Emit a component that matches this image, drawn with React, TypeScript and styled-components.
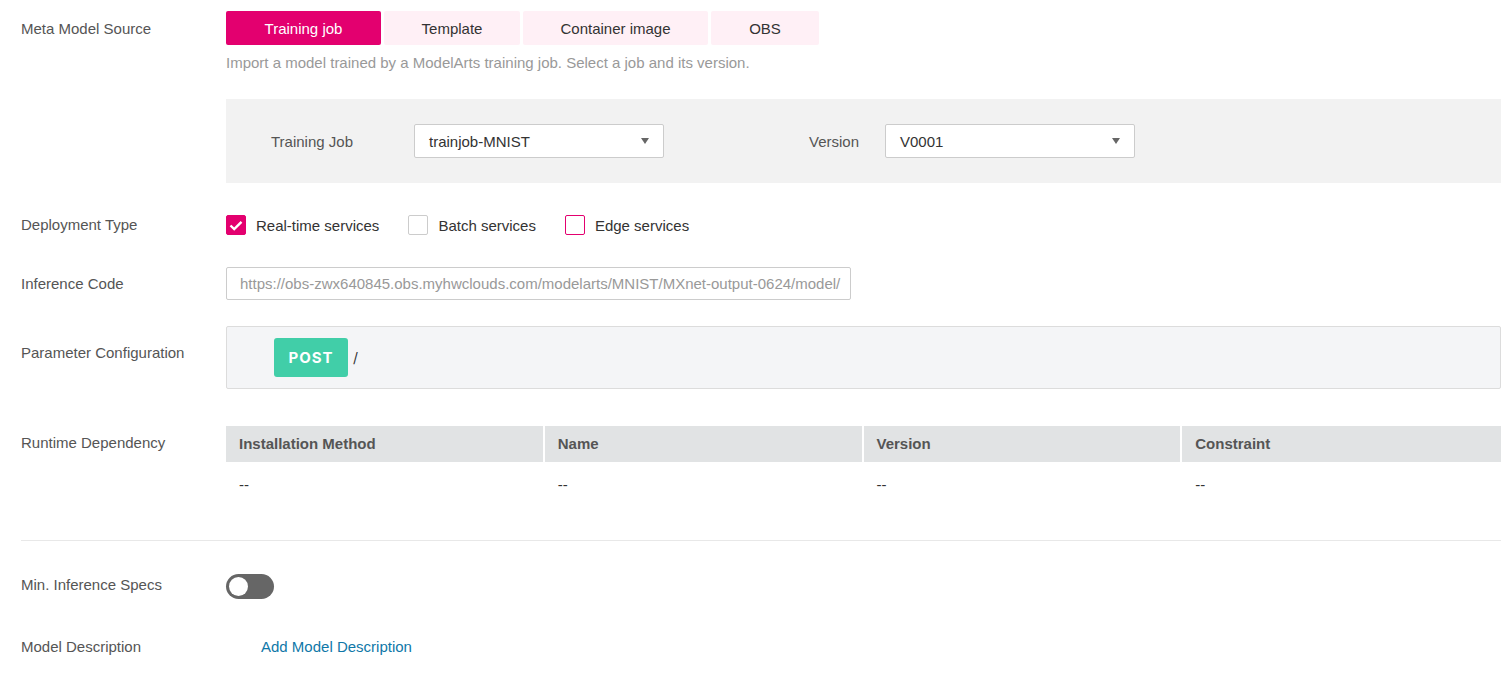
import styled, { createGlobalStyle } from 'styled-components';

const Global = createGlobalStyle`
    html, body {
        margin: 0;
        padding: 0;
        background: #fff;
    }
    body {
        font-family: "Liberation Sans", Arial, sans-serif;
        font-size: 15px;
        color: #333;
    }
`;

const Page = styled.div`
    width: 1511px;
    box-sizing: border-box;
    padding: 11px 10px 0 21px;
`;

const Row = styled.div<{ $mt?: number }>`
    display: grid;
    grid-template-columns: 205px 1fr;
    align-items: start;
    margin-top: ${p => p.$mt ?? 0}px;
`;

const Label = styled.div<{ $pt?: number }>`
    padding-top: ${p => p.$pt ?? 0}px;
    line-height: 20px;
    color: #555;
    white-space: nowrap;
`;

const Content = styled.div`
    display: flex;
    flex-direction: column;
    min-width: 0;
`;

/* Вкладки источника модели */
const Tabs = styled.div`
    display: flex;
    gap: 3px;
`;

const Tab = styled.div<{ $active?: boolean; $w: number }>`
    width: ${p => p.$w}px;
    height: 34px;
    line-height: 36px;
    text-align: center;
    border-radius: 2px;
    background: ${p => (p.$active ? '#e3006f' : '#fff0f6')};
    color: ${p => (p.$active ? '#fff' : '#333')};
`;

const Hint = styled.div`
    margin-top: 9px;
    line-height: 17px;
    color: #999;
`;

const Panel = styled.div`
    margin-top: 28px;
    height: 84px;
    background: #f2f2f2;
    display: flex;
    align-items: center;
    padding-left: 45px;
`;

const PanelLabel = styled.div<{ $w: number; $ml?: number }>`
    width: ${p => p.$w}px;
    margin-left: ${p => p.$ml ?? 0}px;
    color: #555;
`;

const Select = styled.div`
    width: 250px;
    height: 34px;
    box-sizing: border-box;
    border: 1px solid #ccc;
    border-radius: 2px;
    background: #fff;
    display: flex;
    align-items: center;
    justify-content: space-between;
    padding: 0 14px 0 14px;
    color: #333;
`;

const Caret = styled.span`
    width: 0;
    height: 0;
    border-left: 4px solid transparent;
    border-right: 4px solid transparent;
    border-top: 6px solid #666;
`;

/* Чекбоксы типа развертывания */
const Checks = styled.div`
    display: flex;
    align-items: center;
    gap: 29px;
    height: 20px;
`;

const CheckItem = styled.label`
    display: flex;
    align-items: center;
    gap: 10px;
    color: #333;
`;

const Box = styled.span<{ $state: 'on' | 'off' | 'hover' }>`
    width: 20px;
    height: 20px;
    box-sizing: border-box;
    border-radius: 2px;
    display: flex;
    align-items: center;
    justify-content: center;
    background: ${p => (p.$state === 'on' ? '#e3006f' : '#fff')};
    border: 1px solid ${p => (p.$state === 'off' ? '#ccc' : '#e3006f')};
`;

const Input = styled.div`
    width: 625px;
    height: 33px;
    box-sizing: border-box;
    border: 1px solid #ccc;
    border-radius: 2px;
    padding: 0 13px;
    line-height: 31px;
    color: #999;
    white-space: nowrap;
    overflow: hidden;
`;

const ParamBox = styled.div`
    height: 63px;
    box-sizing: border-box;
    border: 1px solid #dcdcdc;
    border-radius: 2px;
    background: #f4f5f7;
    display: flex;
    align-items: flex-start;
    padding: 11px 0 0 47px;
`;

const Method = styled.div`
    width: 74px;
    height: 39px;
    border-radius: 3px;
    background: #41cea8;
    color: #fff;
    font-family: Inter, "Open Sans", sans-serif;
    font-weight: 700;
    font-size: 15px;
    letter-spacing: 1px;
    display: flex;
    align-items: center;
    justify-content: center;
`;

const Path = styled.span`
    margin: 11px 0 0 5px;
    font-family: Inter, sans-serif;
    font-size: 14px;
    color: #333;
`;

/* Таблица зависимостей */
const Table = styled.div`
    display: grid;
    grid-template-columns: repeat(4, 1fr);
`;

const Th = styled.div`
    height: 36px;
    line-height: 36px;
    background: #e1e3e4;
    padding-left: 13px;
    font-weight: 700;
    color: #555;
    border-right: 2px solid #fff;
    &:nth-child(4) {
        border-right: none;
    }
`;

const Td = styled.div`
    height: 46px;
    line-height: 46px;
    padding-left: 13px;
    color: #333;
`;

const Divider = styled.div`
    margin-top: 32px;
    height: 1px;
    background: #e8e8e8;
`;

const Toggle = styled.div`
    width: 48px;
    height: 25px;
    border-radius: 13px;
    background: #666;
    display: flex;
    align-items: center;
    padding-left: 3px;
    box-sizing: border-box;
`;

const Knob = styled.span`
    width: 19px;
    height: 19px;
    border-radius: 50%;
    background: #fff;
`;

const Link = styled.a`
    margin-left: 35px;
    line-height: 20px;
    color: #0f78a8;
    text-decoration: none;
    cursor: pointer;
`;

const Check = () => (
    <svg width="14" height="11" viewBox="0 0 14 11">
        <path d="M1.5 5.5 L5.2 9 L12.5 1.8" fill="none" stroke="#fff" strokeWidth="2.4" />
    </svg>
);

const App = () => {
    const tabs = [
        { name: 'Training job', w: 155, active: true },
        { name: 'Template', w: 136 },
        { name: 'Container image', w: 185 },
        { name: 'OBS', w: 108 },
    ];
    const cols = ['Installation Method', 'Name', 'Version', 'Constraint'];

    return (
        <Page>
            <Global />
            <Row>
                <Label $pt={8}>Meta Model Source</Label>
                <Content>
                    <Tabs>
                        {tabs.map(t => (
                            <Tab key={t.name} $w={t.w} $active={t.active}>
                                {t.name}
                            </Tab>
                        ))}
                    </Tabs>
                    <Hint>Import a model trained by a ModelArts training job. Select a job and its version.</Hint>
                    <Panel>
                        <PanelLabel $w={143}>Training Job</PanelLabel>
                        <Select>
                            trainjob-MNIST
                            <Caret />
                        </Select>
                        <PanelLabel $w={76} $ml={145}>Version</PanelLabel>
                        <Select>
                            V0001
                            <Caret />
                        </Select>
                    </Panel>
                </Content>
            </Row>

            <Row $mt={32}>
                <Label>Deployment Type</Label>
                <Checks>
                    <CheckItem>
                        <Box $state="on">
                            <Check />
                        </Box>
                        Real-time services
                    </CheckItem>
                    <CheckItem>
                        <Box $state="off" />
                        Batch services
                    </CheckItem>
                    <CheckItem>
                        <Box $state="hover" />
                        Edge services
                    </CheckItem>
                </Checks>
            </Row>

            <Row $mt={32}>
                <Label $pt={7}>Inference Code</Label>
                <Input>https://obs-zwx640845.obs.myhwclouds.com/modelarts/MNIST/MXnet-output-0624/model/</Input>
            </Row>

            <Row $mt={26}>
                <Label $pt={17}>Parameter Configuration</Label>
                <ParamBox>
                    <Method>POST</Method>
                    <Path>/</Path>
                </ParamBox>
            </Row>

            <Row $mt={37}>
                <Label $pt={7}>Runtime Dependency</Label>
                <Table>
                    {cols.map(c => (
                        <Th key={c}>{c}</Th>
                    ))}
                    {cols.map(c => (
                        <Td key={c}>--</Td>
                    ))}
                </Table>
            </Row>

            <Divider />

            <Row $mt={33}>
                <Label $pt={1}>Min. Inference Specs</Label>
                <Toggle>
                    <Knob />
                </Toggle>
            </Row>

            <Row $mt={38}>
                <Label>Model Description</Label>
                <div>
                    <Link>Add Model Description</Link>
                </div>
            </Row>
        </Page>
    );
};

export default App;
